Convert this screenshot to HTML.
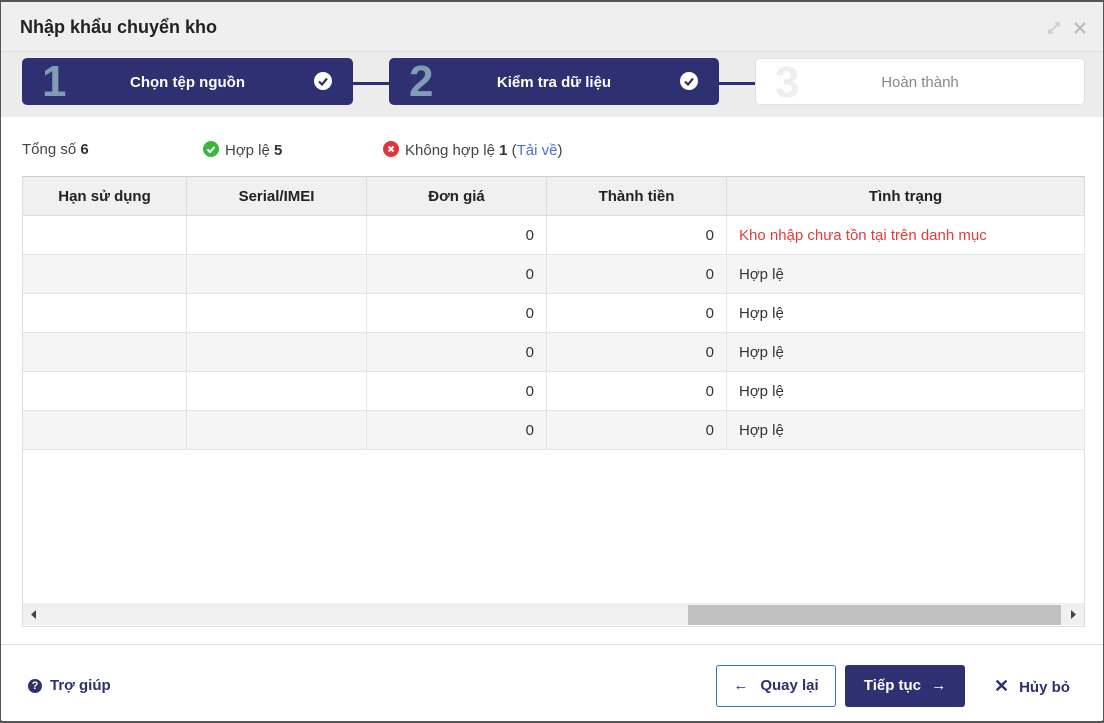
<!DOCTYPE html>
<html><head><meta charset="utf-8"><style>
*{box-sizing:border-box;margin:0;padding:0}
body{width:1104px;height:723px;background:#555;font-family:"Liberation Sans",Arial,sans-serif;position:relative;overflow:hidden;font-size:15px;color:#333}
.dlg{position:absolute;left:1px;top:2px;width:1102px;height:719px;background:#fff;border-radius:2px}
.hdr{position:absolute;left:0;top:0;width:1102px;height:50px;background:#efefef;border-bottom:1px solid #ddd}
.hdr h1{position:absolute;left:19px;top:15px;font-size:18px;font-weight:bold;color:#222}
.steps{position:absolute;left:0;top:50px;width:1102px;height:65px;background:#ececec}
.st{position:absolute;top:6px;height:47px;border-radius:5px;background:#2e3072;color:#fff;font-size:15px;font-weight:bold}
.st .n{position:absolute;left:20px;top:1px;font-size:44px;font-weight:bold;color:#7f9db5;line-height:46px}
.st .t{position:absolute;left:0;right:0;top:16px;text-align:center}
.st .c{position:absolute;right:21px;top:14px;width:18px;height:18px;border-radius:50%;background:#fff}
.ln{position:absolute;top:30px;height:3px;background:#2e3072}
.sum{position:absolute;top:139px;font-size:15px;color:#444}
.ic{display:inline-block;width:16px;height:16px;border-radius:50%;vertical-align:-2px;margin-right:6px;position:relative}
table{position:absolute;left:21px;top:174px;border-collapse:collapse;font-size:15px;table-layout:fixed;width:1062px}
th{height:39px;background:#f0f0f0;font-weight:bold;color:#222;border:1px solid #ddd;border-top:1px solid #ccc}
td{height:39px;border-right:1px solid #e4e4e4;border-bottom:1px solid #e4e4e4;padding:0 12px;text-align:right}
tr.g td{background:#f5f5f5}
td.s{text-align:left}
.tbox{position:absolute;left:21px;top:174px;width:1063px;height:451px;border:1px solid #ddd}
.sb{position:absolute;left:22px;top:601px;width:1061px;height:22px;background:#f0f0f0}
.btn{position:absolute;top:663px;height:42px;border-radius:3px;font-weight:bold;font-size:15px;color:#2e3072;line-height:42px}
</style></head><body>
<div class="dlg">
<div class="hdr"><h1>Nhập khẩu chuyển kho</h1>
<svg style="position:absolute;left:1046px;top:19px" width="14" height="14"><path d="M2 12L12 2M8 2h4v4M2 8v4h4" stroke="#ccc" stroke-width="1.6" fill="none"/></svg>
<svg style="position:absolute;left:1072px;top:19px" width="14" height="14"><path d="M2 2L12 12M12 2L2 12" stroke="#bbb" stroke-width="2.2"/></svg>
</div>
<div class="steps">
<div class="st" style="left:21px;width:331px"><span class="n">1</span><span class="t">Chọn tệp nguồn</span><span class="c"><svg width="18" height="18"><path d="M5 9.5l3 3 5-6" stroke="#2e3072" stroke-width="2.2" fill="none"/></svg></span></div>
<div class="ln" style="left:352px;width:37px"></div>
<div class="st" style="left:388px;width:330px"><span class="n">2</span><span class="t">Kiểm tra dữ liệu</span><span class="c"><svg width="18" height="18"><path d="M5 9.5l3 3 5-6" stroke="#2e3072" stroke-width="2.2" fill="none"/></svg></span></div>
<div class="ln" style="left:718px;width:37px"></div>
<div class="st" style="left:754px;width:330px;background:#fff;border:1px solid #e2e2e2;color:#888;font-weight:normal"><span class="n" style="color:#eee;left:19px">3</span><span class="t" style="top:15px;left:0">Hoàn thành</span></div>
</div>
<div class="sum" style="left:21px">Tổng số <b style="color:#333">6</b></div>
<div class="sum" style="left:202px"><span class="ic" style="background:#3cb73c"><svg width="16" height="16" style="position:absolute;left:0;top:0"><path d="M4.5 8.5l2.5 2.5 4.5-5" stroke="#fff" stroke-width="2" fill="none"/></svg></span>Hợp lệ <b style="color:#333">5</b></div>
<div class="sum" style="left:382px"><span class="ic" style="background:#e5343d"><svg width="16" height="16" style="position:absolute;left:0;top:0"><path d="M5.5 5.5l5 5M10.5 5.5l-5 5" stroke="#fff" stroke-width="2"/></svg></span>Không hợp lệ <b style="color:#333">1</b> (<span style="color:#4a6fd8">Tải về</span>)</div>
<div class="tbox"></div>
<table>
<colgroup><col style="width:164px"><col style="width:180px"><col style="width:180px"><col style="width:180px"><col style="width:358px"></colgroup>
<tr><th>Hạn sử dụng</th><th>Serial/IMEI</th><th>Đơn giá</th><th>Thành tiền</th><th>Tình trạng</th></tr>
<tr><td></td><td></td><td>0</td><td>0</td><td class="s" style="color:#e53b3b">Kho nhập chưa tồn tại trên danh mục</td></tr>
<tr class="g"><td></td><td></td><td>0</td><td>0</td><td class="s">Hợp lệ</td></tr>
<tr><td></td><td></td><td>0</td><td>0</td><td class="s">Hợp lệ</td></tr>
<tr class="g"><td></td><td></td><td>0</td><td>0</td><td class="s">Hợp lệ</td></tr>
<tr><td></td><td></td><td>0</td><td>0</td><td class="s">Hợp lệ</td></tr>
<tr class="g"><td></td><td></td><td>0</td><td>0</td><td class="s">Hợp lệ</td></tr>
</table>
<div class="sb"><div style="position:absolute;left:665px;top:2px;width:373px;height:20px;background:#c1c1c1"></div>
<svg style="position:absolute;left:8px;top:7px" width="6" height="9"><path d="M5 0L0 4.5 5 9z" fill="#444"/></svg>
<svg style="position:absolute;left:1048px;top:7px" width="6" height="9"><path d="M0 0L5 4.5 0 9z" fill="#444"/></svg></div>
<div style="position:absolute;left:0;top:642px;width:1102px;height:1px;background:#ddd"></div>
<div class="btn" style="left:27px;top:663px"><span style="display:inline-block;width:14px;height:14px;border-radius:50%;background:#2e3072;color:#fff;font-size:11px;line-height:14px;text-align:center;vertical-align:1px;margin-right:8px">?</span>Trợ giúp</div>
<div class="btn" style="left:715px;width:120px;border:1px solid #2a7aa8;text-align:center;line-height:40px"><span style="margin-right:12px">←</span>Quay lại</div>
<div class="btn" style="left:844px;width:120px;background:#2e3072;color:#fff;text-align:center">Tiếp tục <span style="margin-left:6px">→</span></div>
<div class="btn" style="left:993px"><span style="font-size:18px;margin-right:10px">✕</span>Hủy bỏ</div>
</div>
</body></html>
